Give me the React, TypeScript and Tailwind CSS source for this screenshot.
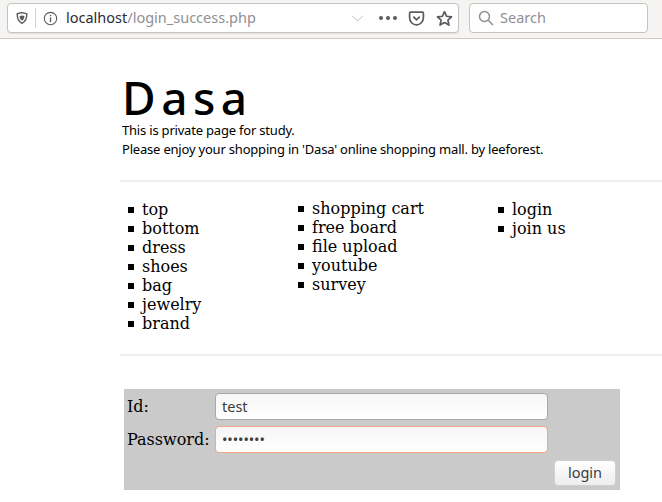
import { ReactNode } from "react";

const sans = "font-['Noto_Sans','Open_Sans',sans-serif]";
const serif = "font-['DejaVu_Serif',serif]";

function Menu(props: { items: string[]; className: string }) {
  return (
    <ul className={props.className}>
      {props.items.map((item) => (
        <li key={item} className="flex items-center h-[19px] text-[16px] text-black">
          <span className="w-[6px] h-[6px] bg-black mr-[8px] mt-[1px] shrink-0"></span>
          {item}
        </li>
      ))}
    </ul>
  );
}

function ToolIcon(props: { children: ReactNode; className?: string }) {
  return (
    <svg viewBox="0 0 16 16" fill="none" stroke="#5b5b5f" strokeWidth="1.6" className={props.className ?? "w-4 h-4"}>
      {props.children}
    </svg>
  );
}

function Toolbar() {
  return (
    <div className={`h-[39px] bg-[#f5f4f2] border-b border-[#cfcbc7] flex items-start pt-[3px] pl-[7px] ${sans}`}>
      <div className="w-[452px] h-[30px] bg-white border border-[#c6c4c1] rounded-[4px] shadow-[0_1px_1px_rgba(0,0,0,0.08)] flex items-center pl-[7px] pr-[5px]">
        <ToolIcon className="w-[14px] h-[14px]">
          <path d="M8 1.8 L13.5 3.2 C13.6 8.5 12 12.3 8 14.2 C4 12.3 2.4 8.5 2.5 3.2 Z" />
          <path d="M8 5 L10.8 5.6 C10.7 8 10 9.8 8 11 C6 9.8 5.3 8 5.2 5.6 Z" fill="#5b5b5f" stroke="none" />
        </ToolIcon>
        <div className="w-px h-[20px] bg-[#d4d2cf] ml-[6px] mr-[7px]"></div>
        <svg viewBox="0 0 16 16" fill="none" stroke="#5b5b5f" strokeWidth="1.2" className="w-[15px] h-[15px]">
          <circle cx="8" cy="8" r="6.6" />
          <path d="M8 7 V11.6 M8 4.2 V5.6" strokeWidth="1.5" />
        </svg>
        <span className="ml-[8px] text-[14.5px] text-[#2b2b33]">
          localhost<span className="text-[#8f8f94]">/login_success.php</span>
        </span>
        <div className="flex-1"></div>
        <svg viewBox="0 0 14 8" fill="none" stroke="#cfcfd1" strokeWidth="1.2" className="w-[13px] h-[7px]">
          <path d="M1 1 L7 7 L13 1" />
        </svg>
        <div className="flex gap-[2px] ml-[15px]">
          <span className="w-[4px] h-[4px] rounded-full bg-[#5b5b5f] mr-[1px]"></span>
          <span className="w-[4px] h-[4px] rounded-full bg-[#5b5b5f] mr-[1px]"></span>
          <span className="w-[4px] h-[4px] rounded-full bg-[#5b5b5f]"></span>
        </div>
        <ToolIcon className="w-[17px] h-[17px] ml-[11px]">
          <path d="M2.5 2 H13.5 C14.2 2 14.5 2.4 14.5 3 V7 C14.5 11 11.5 14 8 14 C4.5 14 1.5 11 1.5 7 V3 C1.5 2.4 1.8 2 2.5 2 Z" />
          <path d="M5 6.2 L8 9.2 L11 6.2" />
        </ToolIcon>
        <ToolIcon className="w-[17px] h-[17px] ml-[11px]">
          <path d="M8 1.6 L10 5.9 L14.6 6.4 L11.2 9.5 L12.2 14.2 L8 11.8 L3.8 14.2 L4.8 9.5 L1.4 6.4 L6 5.9 Z" strokeLinejoin="round" />
        </ToolIcon>
      </div>
      <div className="w-[179px] h-[30px] ml-[10px] bg-white border border-[#c6c4c1] rounded-[4px] flex items-center pl-[8px]">
        <svg viewBox="0 0 16 16" fill="none" stroke="#8f8f94" strokeWidth="1.5" className="w-[16px] h-[16px]">
          <circle cx="6.5" cy="6.5" r="5" />
          <path d="M10.2 10.2 L15 15" />
        </svg>
        <span className="ml-[6px] text-[14.5px] text-[#8f8f94]">Search</span>
      </div>
    </div>
  );
}

function Field(props: { value: string; focused?: boolean; dots?: boolean }) {
  return (
    <div
      className={`w-[333px] h-[27px] rounded-[4px] border bg-linear-to-b from-[#f6f6f6] to-white flex items-center pl-[6px] text-[14.5px] text-[#3c3c3c] ${sans} ${
        props.focused ? "border-[#f2a68a]" : "border-[#a8a8a8]"
      } ${props.dots ? "tracking-[-0.1px]" : ""}`}
    >
      {props.value}
    </div>
  );
}

export default function App() {
  return (
    <div className="w-[662px] h-[502px] overflow-hidden bg-white">
      <Toolbar />
      <div className="ml-[120px]">
        <header className={`pl-[2px] h-[141px] pt-[36px] text-black ${sans}`}>
          <h1 className="text-[46px] leading-[44px] font-medium tracking-[5.5px]">Dasa</h1>
          <p className="text-[13px] leading-[20px] tracking-[-0.2px] mt-[1px]">This is private page for study.</p>
          <p className="text-[13px] leading-[19px] tracking-[-0.2px]">
            Please enjoy your shopping in 'Dasa' online shopping mall. by leeforest.
          </p>
        </header>
        <div className={`h-[176px] border-y-2 border-[#eeeeee] flex items-start pt-[17px] ${serif}`}>
          <Menu className="ml-[8px] w-[170px] mt-[1px]" items={["top", "bottom", "dress", "shoes", "bag", "jewelry", "brand"]} />
          <Menu className="w-[200px]" items={["shopping cart", "free board", "file upload", "youtube", "survey"]} />
          <Menu className="mt-[1px]" items={["login", "join us"]} />
        </div>
        <form className={`ml-[4px] mt-[33px] w-[496px] h-[101px] bg-[#cacaca] pt-[4px] pl-[3px] text-black text-[16px] ${serif}`}>
          <div className="flex items-center">
            <label className="w-[88px]">Id:</label>
            <Field value="test" />
          </div>
          <div className="flex items-center mt-[6px]">
            <label className="w-[88px]">Password:</label>
            <Field value="••••••••" focused dots />
          </div>
          <div className="flex justify-end pr-[4px] mt-[7px]">
            <button
              type="button"
              className={`w-[62px] h-[26px] rounded-[4px] bg-linear-to-b from-white to-[#ededed] border border-[#d0d0d0] text-[14.5px] text-[#3c3c3c] ${sans}`}
            >
              login
            </button>
          </div>
        </form>
      </div>
    </div>
  );
}
